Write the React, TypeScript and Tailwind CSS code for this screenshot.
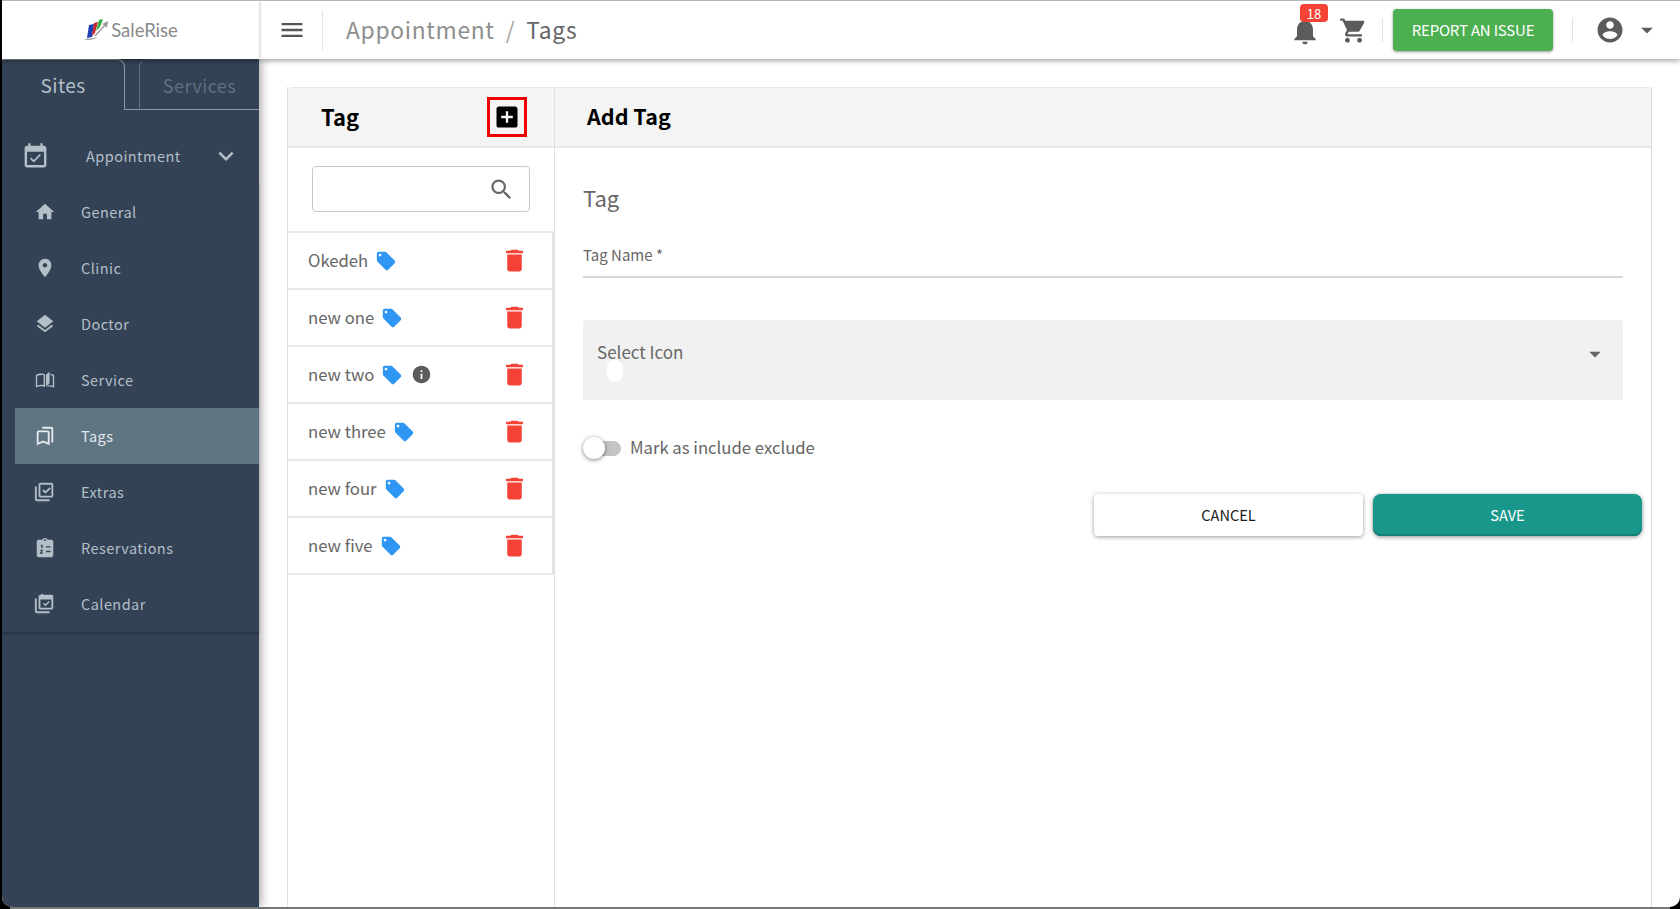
import React from "react";

const paths = {
    menu: "M3 18h18v-2H3v2zm0-5h18v-2H3v2zm0-7v2h18V6H3z",
    search: "M15.5 14h-.79l-.28-.27C15.41 12.59 16 11.11 16 9.5 16 5.91 13.09 3 9.5 3S3 5.91 3 9.5 5.91 16 9.5 16c1.61 0 3.09-.59 4.23-1.57l.27.28v.79l5 4.99L20.49 19l-4.99-5zm-6 0C7.01 14 5 11.99 5 9.5S7.01 5 9.5 5 14 7.01 14 9.5 11.99 14 9.5 14z",
    home: "M10 20v-6h4v6h5v-8h3L12 3 2 12h3v8z",
    place: "M12 2C8.13 2 5 5.13 5 9c0 5.25 7 13 7 13s7-7.75 7-13c0-3.87-3.13-7-7-7zm0 9.5c-1.38 0-2.5-1.12-2.5-2.5s1.12-2.5 2.5-2.5 2.5 1.12 2.5 2.5-1.12 2.5-2.5 2.5z",
    layers: "M11.99 18.54l-7.37-5.73L3 14.07l9 7 9-7-1.63-1.27-7.38 5.74zM12 16l7.36-5.73L21 9l-9-7-9 7 1.63 1.27L12 16z",
    tag: "M21.41 11.58l-9-9C12.05 2.22 11.55 2 11 2H4c-1.1 0-2 .9-2 2v7c0 .55.22 1.05.59 1.42l9 9c.36.36.86.58 1.41.58.55 0 1.05-.22 1.41-.59l7-7c.37-.36.59-.86.59-1.41 0-.55-.23-1.06-.59-1.42zM5.5 7C4.67 7 4 6.33 4 5.5S4.67 4 5.5 4 7 4.67 7 5.5 6.33 7 5.5 7z",
    trash: "M6 19c0 1.1.9 2 2 2h8c1.1 0 2-.9 2-2V7H6v12zM19 4h-3.5l-1-1h-5l-1 1H5v2h14V4z",
    info: "M12 2C6.48 2 2 6.48 2 12s4.48 10 10 10 10-4.48 10-10S17.52 2 12 2zm1 15h-2v-6h2v6zm0-8h-2V7h2v2z",
    bell: "M12 22c1.1 0 2-.9 2-2h-4c0 1.1.89 2 2 2zm6-6v-5c0-3.07-1.64-5.64-4.5-6.32V4c0-.83-.67-1.5-1.5-1.5s-1.5.67-1.5 1.5v.68C7.63 5.36 6 7.92 6 11v5l-2 2v1h16v-1l-2-2z",
    cart: "M7 18c-1.1 0-1.99.9-1.99 2S5.9 22 7 22s2-.9 2-2-.9-2-2-2zM1 2v2h2l3.6 7.59-1.35 2.45c-.16.28-.25.61-.25.96 0 1.1.9 2 2 2h12v-2H7.42c-.14 0-.25-.11-.25-.25l.03-.12.9-1.63h7.45c.75 0 1.41-.41 1.75-1.03l3.58-6.49c.08-.14.12-.31.12-.48 0-.55-.45-1-1-1H5.21l-.94-2H1zm16 16c-1.1 0-1.99.9-1.99 2s.89 2 1.99 2 2-.9 2-2-.9-2-2-2z",
    account: "M12 2C6.48 2 2 6.48 2 12s4.48 10 10 10 10-4.48 10-10S17.52 2 12 2zm0 3c1.66 0 3 1.34 3 3s-1.34 3-3 3-3-1.34-3-3 1.34-3 3-3zm0 14.2c-2.5 0-4.71-1.28-6-3.22.03-1.99 4-3.08 6-3.08 1.99 0 5.97 1.09 6 3.08-1.29 1.94-3.5 3.22-6 3.22z",
    caret: "M7 10l5 5 5-5z",
    chevron: "M16.59 8.59L12 13.17 7.41 8.59 6 10l6 6 6-6z",
    event: "M16.53 11.06L15.47 10l-4.88 4.88-2.12-2.12-1.06 1.06L10.59 17l5.94-5.94zM19 3h-1V1h-2v2H8V1H6v2H5c-1.11 0-1.99.9-1.99 2L3 19c0 1.1.89 2 2 2h14c1.1 0 2-.9 2-2V5c0-1.1-.9-2-2-2zm0 16H5V8h14v11z",
    addBox: "M19 3H5c-1.11 0-2 .9-2 2v14c0 1.1.89 2 2 2h14c1.1 0 2-.9 2-2V5c0-1.1-.89-2-2-2zm-2 10h-4v4h-2v-4H7v-2h4V7h2v4h4v2z",
    book: "M2 6.5C3.8 5.4 6 5 8 5c1.5 0 2.9.3 4 1.1V20c-1.1-.8-2.5-1.1-4-1.1-2 0-4.200.4-6 1.500V6.500zM3.500 7.400v10.500c1.400-.5 3-.8 4.500-.8 1 0 1.800.1 2.500.4V6.900C9.800 6.600 8.900 6.500 8 6.500c-1.500 0-3.100.3-4.500.9zM13 6.300l4-3.300v12.500l-4 3.500V6.300zM18 5.200c1.500.2 2.900.6 4 1.300v14c-1.800-1.100-4-1.500-6-1.500-.8 0-1.500.1-2.200.2l1.800-1.500c2-.1 3.900.2 4.900.7V7.400c-.8-.3-1.600-.5-2.500-.6V5.200z",
    bookmarks: "M9 2h10c1.100 0 2 .9 2 2v15h-2V4H9V2zM5 6h10c1.100 0 2 .9 2 2v14l-7-3-7 3V8c0-1.100.9-2 2-2zm0 2v11l5-2.100 5 2.100V8H5z",
    libraryCheck: "M19 4v12H7V4h12m0-2H7c-1.100 0-2 .9-2 2v12c0 1.100.9 2 2 2h12c1.100 0 2-.9 2-2V4c0-1.100-.9-2-2-2zm-6.490 12L9 10.500l1.410-1.410 2.100 2.090 4.480-4.480 1.410 1.410L12.510 14zM3 6H1v14c0 1.100.9 2 2 2h14v-2H3V6z",
    reservations: "M19 3h-4.180C14.400 1.840 13.300 1 12 1s-2.400.84-2.820 2H5c-1.100 0-2 .9-2 2v15c0 1.100.9 2 2 2h14c1.100 0 2-.9 2-2V5c0-1.100-.9-2-2-2zm-7-.5c.55 0 1 .45 1 1s-.45 1-1 1-1-.45-1-1 .45-1 1-1zM13 10h5v1.500h-5V10zm0 5h5v1.500h-5V15zM7.500 8.500H9.500V12H8V10H7.500V8.500zM6.500 14h3.200v1.200L8 17h1.800v1.200H6.500v-1.100l1.800-2H6.500V14z",
    calendarStack: "M19 1v1h-9V1H8v1H7c-1.100 0-2 .9-2 2v12c0 1.100.9 2 2 2h12c1.100 0 2-.9 2-2V4c0-1.100-.9-2-2-2h-.0V1h-2zM7 7h12v9H7V7zm9.200 1.700l1 1-4.700 4.700-2.700-2.700 1-1 1.700 1.700 3.700-3.700zM3 6H1v14c0 1.100.9 2 2 2h14v-2H3V6z",
};

type IconName = keyof typeof paths;

const Icon = ({ name, className }: { name: IconName; className: string }) => (
    <svg viewBox="0 0 24 24" fill="currentColor" className={className}>
        <path d={paths[name]} />
    </svg>
);

const sideItems: { label: string; icon: IconName; active?: boolean }[] = [
    { label: "General", icon: "home" },
    { label: "Clinic", icon: "place" },
    { label: "Doctor", icon: "layers" },
    { label: "Service", icon: "book" },
    { label: "Tags", icon: "bookmarks", active: true },
    { label: "Extras", icon: "libraryCheck" },
    { label: "Reservations", icon: "reservations" },
    { label: "Calendar", icon: "calendarStack" },
];

const tags = [
    { name: "Okedeh" },
    { name: "new one" },
    { name: "new two", info: true },
    { name: "new three" },
    { name: "new four" },
    { name: "new five" },
];

const Logo = () => (
    <div className="flex items-center">
        <svg viewBox="0 0 26 24" className="w-[26px] h-[24px]">
            <path d="M1 21c3 2 9 1 14-2-5 1-10 2-14 2z" fill="#9a9a9a" />
            <path d="M6 7l5-1-2 13-5 1z" fill="#1f3fb5" />
            <path d="M11 5l4-1-3 11-3 3z" fill="#c8242c" />
            <path d="M16 2l4-1-3 8-4 4z" fill="#2fae3c" />
            <path d="M11 18l10-11-2-1 6-3-1 7-2-2-9 10z" fill="#9a9a9a" />
        </svg>
        <span className="ml-[2px] text-[18.5px] leading-none text-[#8a8a8a] font-['Lato',sans-serif]">
            SaleRise
        </span>
    </div>
);

const Header = () => (
    <header className="flex h-[58px] shrink-0 bg-white shadow-[0_2px_5px_rgba(0,0,0,0.35)] relative z-20">
        <div className="flex w-[257px] shrink-0 items-center justify-center shadow-[1px_0_3px_rgba(0,0,0,0.2)]">
            <Logo />
        </div>
        <div className="flex flex-1 items-center pl-[19px]">
            <Icon name="menu" className="w-[28px] h-[28px] text-[#555]" />
            <div className="ml-[16px] h-[40px] w-px bg-[#e2e2e2]" />
            <div className="ml-[23px] flex items-center text-[22.8px] tracking-[0.7px] text-[#8e8e8e]">
                <span>Appointment</span>
                <span className="mx-[11px] text-[#a5a5a5]">/</span>
                <span className="text-[#666]">Tags</span>
            </div>
            <div className="ml-auto flex items-center">
                <div className="relative mt-[2px] flex h-[32px] w-[32px] items-center justify-center">
                    <Icon name="bell" className="w-[32px] h-[32px] text-[#5c5c5c]" />
                    <span className="absolute left-[11px] -top-[11px] flex h-[18px] w-[28px] items-center justify-center rounded-[4px] bg-[#f44336] text-[13px] leading-none text-white">
                        18
                    </span>
                </div>
                <Icon name="cart" className="ml-[18px] w-[29px] h-[29px] text-[#5c5c5c]" />
                <div className="ml-[14px] h-[24px] w-px bg-[#e2e2e2]" />
                <button className="ml-[10px] flex h-[42px] w-[160px] items-center justify-center rounded-[4px] bg-[#4caf50] text-[15px] tracking-[-0.2px] text-white shadow-[0_1px_3px_rgba(0,0,0,0.4)]">
                    REPORT AN ISSUE
                </button>
                <div className="ml-[19px] h-[24px] w-px bg-[#e2e2e2]" />
                <Icon name="account" className="ml-[22px] w-[30px] h-[30px] text-[#5c5c5c]" />
                <Icon name="caret" className="ml-[8px] mr-[19px] w-[28px] h-[28px] text-[#5c5c5c]" />
            </div>
        </div>
    </header>
);

const Sidebar = () => (
    <aside className="flex w-[257px] shrink-0 flex-col bg-[#334254] text-[#b3bfc8] tracking-[0.45px] shadow-[3px_0_8px_rgba(0,0,0,0.3)] relative z-10">
        <div className="flex h-[51px] shrink-0 items-stretch">
            <div className="flex w-[123px] items-center justify-center rounded-tr-[8px] border-t border-r border-[#8b9aa6] text-[19px]">
                Sites
            </div>
            <div className="w-[14px] border-b border-[#8b9aa6]" />
            <div className="flex flex-1 items-center justify-center rounded-tl-[8px] border-t border-l border-b border-t-[#4a5a6a] border-l-[#5f7080] border-b-[#8b9aa6] pt-[2px] text-[18px] text-[#5f7080]">
                Services
            </div>
        </div>
        <div className="mt-[18px] flex h-[56px] items-center pl-[19px]">
            <Icon name="event" className="w-[29px] h-[29px]" />
            <span className="ml-[36px] text-[14.5px]">Appointment</span>
            <Icon name="chevron" className="ml-[30px] w-[30px] h-[30px]" />
        </div>
        <nav className="flex flex-col border-b border-[#2a3745] pb-0 shadow-[0_1px_2px_rgba(0,0,0,0.25)]">
            {sideItems.map((item) => (
                <div
                    key={item.label}
                    className={`ml-[13px] flex h-[56px] items-center pl-[19px] text-[14.5px] ${
                        item.active ? "bg-[#5f7582] text-[#e4eaee]" : ""
                    }`}
                >
                    <Icon name={item.icon} className="w-[22px] h-[22px]" />
                    <span className="ml-[25px]">{item.label}</span>
                </div>
            ))}
        </nav>
    </aside>
);

const TagPanel = () => (
    <section className="flex w-[268px] shrink-0 flex-col border-x border-[#e0e0e0]">
        <div className="flex h-[61px] shrink-0 items-center justify-between rounded-tl-[4px] border-t border-b-2 border-[#e8e8e8] bg-[#f4f4f4] pl-[33px] pr-[27px]">
            <span className="pb-[1px] text-[22px] font-bold text-black">Tag</span>
            <button className="flex h-[40px] w-[40px] items-center justify-center border-[3px] border-[#f00000]">
                <Icon name="addBox" className="w-[28px] h-[28px] text-black" />
            </button>
        </div>
        <div className="flex h-[85px] shrink-0 items-center justify-center border-b-2 border-[#ececec] pb-[1px]">
            <div className="flex h-[46px] w-[218px] items-center justify-end rounded-[4px] border border-[#c8c8c8] pr-[14px]">
                <Icon name="search" className="w-[27px] h-[27px] text-[#6a6a6a]" />
            </div>
        </div>
        <ul className="border-r-[2px] border-[#e4e4e4]">
            {tags.map((tag) => (
                <li
                    key={tag.name}
                    className="flex h-[57px] items-center border-b-2 border-[#e8e8e8] pl-[20px] pr-[23px] text-[16.7px] text-[#666]"
                >
                    <span>{tag.name}</span>
                    <Icon name="tag" className="ml-[7px] w-[22px] h-[22px] text-[#2f96f3]" />
                    {tag.info && <Icon name="info" className="ml-[8px] w-[21px] h-[21px] text-[#5c5c5c]" />}
                    <Icon name="trash" className="ml-auto w-[29px] h-[29px] text-[#f44336]" />
                </li>
            ))}
        </ul>
    </section>
);

const FormPanel = () => (
    <section className="flex flex-1 flex-col border-r border-[#dcdcdc]">
        <div className="flex h-[61px] shrink-0 items-center rounded-tr-[4px] border-t border-b-2 border-[#e8e8e8] bg-[#f4f4f4] pl-[32px]">
            <span className="pb-[1px] text-[21.5px] font-bold text-black">Add Tag</span>
        </div>
        <div className="flex flex-col pl-[28px] pr-[28px] pt-[34px]">
            <h2 className="text-[22px] leading-[30px] text-[#666]">Tag</h2>
            <div className="mt-[32px] h-[34px] border-b-2 border-[#d8d8d8] text-[15px] leading-[22px] text-[#666]">
                Tag Name *
            </div>
            <div className="relative mt-[42px] flex h-[80px] items-start justify-between rounded-t-[4px] bg-[#f1f1f1] pl-[14px] pr-[16px] pt-[20px] text-[17px] text-[#666]">
                <span className="leading-[24px]">Select Icon</span>
                <Icon name="caret" className="w-[28px] h-[28px] -mr-[2px] text-[#666]" />
                <span className="absolute left-[24px] top-[40px] h-[22px] w-[16px] rounded-[8px] bg-white" />
            </div>
            <div className="mt-[36px] flex h-[24px] items-center">
                <div className="relative ml-[3px] h-[15px] w-[35px] rounded-full bg-[#c4c4c4]">
                    <span className="absolute -left-[3px] -top-[4px] h-[22px] w-[22px] rounded-full bg-white shadow-[0_1px_4px_rgba(0,0,0,0.5)]" />
                </div>
                <span className="ml-[9px] text-[16.7px] text-[#666]">Mark as include exclude</span>
            </div>
            <div className="mt-[34px] -mr-[19px] flex justify-end gap-[10px]">
                <button className="flex h-[42px] w-[269px] items-center justify-center rounded-[4px] bg-white text-[14.6px] text-[#1a1a1a] shadow-[0_1px_4px_rgba(0,0,0,0.4)]">
                    CANCEL
                </button>
                <button className="flex h-[42px] w-[269px] items-center justify-center rounded-[8px] bg-[#18978a] text-[14.6px] text-white shadow-[inset_0_-2px_0_#127f74,0_1px_4px_rgba(0,0,0,0.45)]">
                    SAVE
                </button>
            </div>
        </div>
    </section>
);

export default function App() {
    return (
        <div className="h-[909px] w-[1680px] overflow-hidden bg-black font-['Noto_Sans_CJK_JP','Noto_Sans',sans-serif]">
            <div className="ml-[2px] flex h-[907px] flex-col overflow-hidden rounded-b-[10px] border-t border-[#b0b4c0] bg-white">
                <Header />
                <div className="flex min-h-0 flex-1">
                    <Sidebar />
                    <main className="flex flex-1 pl-[28px] pr-[28px] pt-[28px]">
                        <TagPanel />
                        <FormPanel />
                    </main>
                </div>
            </div>
            <div className="mx-[10px] h-[2px] bg-[#777]" />
        </div>
    );
}
